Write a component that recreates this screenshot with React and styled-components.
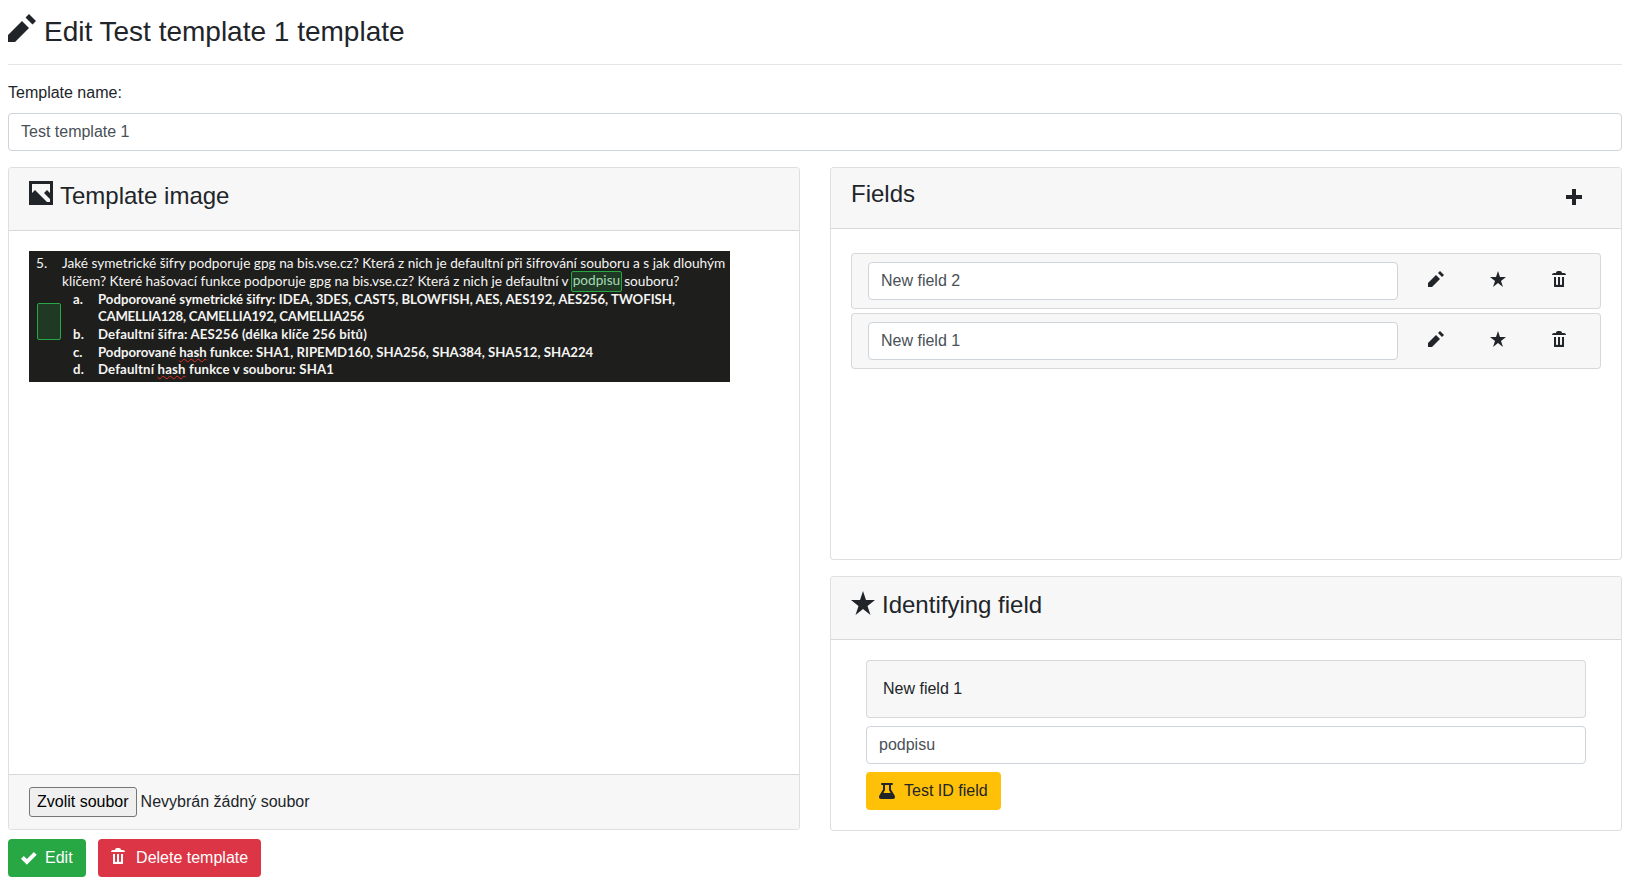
import React from "react";
import styled, { createGlobalStyle } from "styled-components";

const GlobalStyle = createGlobalStyle`
  html, body {
    margin: 0;
    padding: 0;
    background: #fff;
  }
  body {
    font-family: "Liberation Sans", Arial, sans-serif;
    font-size: 16px;
    line-height: 1.5;
    color: #212529;
  }
  * {
    box-sizing: border-box;
  }
`;

const paths = {
  pencil: "M6 0l-1 1 2 2 1-1-2-2zm-2 2l-4 4v2h2l4-4-2-2z",
  star: "M4 0l-1 3h-3l2.5 2-1 3 2.5-2 2.5 2-1-3 2.5-2h-3l-1-3z",
  trash:
    "M3 0c-.55 0-1 .45-1 1h-1c-.55 0-1 .45-1 1h7c0-.55-.45-1-1-1h-1c0-.55-.45-1-1-1h-1zm-2 3v4.81c0 .11.08.19.19.19h4.63c.11 0 .19-.08.19-.19v-4.81h-1v3.5c0 .28-.22.5-.5.5s-.5-.22-.5-.5v-3.5h-1v3.5c0 .28-.22.5-.5.5s-.5-.22-.5-.5v-3.5h-1z",
  plus: "M3 0v3h-3v2h3v3h2v-3h3v-2h-3v-3h-2z",
  check:
    "M6.41 1l-.69.72-2.78 2.78-.81-.78-.72-.72-1.41 1.41.72.72 1.5 1.5.69.72.72-.72 3.5-3.5.72-.72-1.44-1.41z",
  image: "M0 0v8h8v-8h-8zm1 1h6v3l-1-1-1 1 2 2v1h-1l-4-4-1 1v-3z",
  beaker:
    "M1.5 0a.5.5 0 0 0 0 1H2v2.2L.2 6.3C-.3 7.1.2 8 1 8h6c.8 0 1.3-.9.8-1.7L6 3.2V1h.5a.5.5 0 0 0 0-1h-5zM3 1h2v2.5L5.8 5H2.2L3 3.5V1z",
};

const Svg = styled.svg`
  display: block;
  flex: none;
  width: ${(p) => p.$size}px;
  height: ${(p) => p.$size}px;
  margin-top: ${(p) => p.$top || 0}px;
  margin-bottom: ${(p) => p.$raise || 0}px;
  fill: currentColor;
`;

const Icon = ({ name, size = 16, top, raise }) => (
  <Svg viewBox="0 0 8 8" $size={size} $top={top} $raise={raise}>
    <path d={paths[name]} />
  </Svg>
);

const Page = styled.div`
  padding: 0 6px 0 8px;
  width: 1628px;
  height: 895px;
  overflow: hidden;
`;

const Title = styled.h3`
  display: flex;
  align-items: flex-start;
  gap: 8px;
  margin: 0;
  padding: 13px 0 14px;
  font-size: 28px;
  font-weight: 400;
  line-height: 37px;
  border-bottom: 1px solid rgba(0, 0, 0, 0.1);
`;

const Label = styled.label`
  display: block;
  margin: 16px 0 8px;
  line-height: 24px;
`;

const Input = styled.div`
  height: 38px;
  padding: 6px 12px;
  width: ${(p) => p.$width || "100%"};
  flex: none;
  color: #495057;
  background: #fff;
  border: 1px solid #ced4da;
  border-radius: 4px;
`;

const Columns = styled.div`
  display: grid;
  grid-template-columns: minmax(0, 1fr) minmax(0, 1fr);
  column-gap: 30px;
  margin-top: 16px;
`;

const Stack = styled.div`
  display: flex;
  flex-direction: column;
  gap: 16px;
`;

const Card = styled.section`
  display: flex;
  flex-direction: column;
  flex: ${(p) => p.$grow || "none"};
  height: ${(p) => p.$height || "auto"};
  background: #fff;
  border: 1px solid rgba(0, 0, 0, 0.125);
  border-radius: 4px;
  overflow: hidden;
`;

const CardHeader = styled.header`
  display: flex;
  align-items: flex-start;
  justify-content: space-between;
  flex: none;
  height: ${(p) => p.$height}px;
  padding: ${(p) => p.$top}px 20px 0;
  background: #f7f7f7;
  border-bottom: 1px solid rgba(0, 0, 0, 0.125);
`;

const CardTitle = styled.h4`
  display: flex;
  align-items: flex-start;
  gap: 7px;
  margin: 0;
  font-size: 24px;
  font-weight: 400;
  line-height: 29px;
`;

const AddButton = styled.span`
  display: block;
  margin: 10px 19px 0 0;
`;

const CardBody = styled.div`
  flex: 1;
  padding: ${(p) => p.$padding};
`;

const Shot = styled.div`
  position: relative;
  width: 701px;
  height: 131px;
  padding: 4.4px 4px 0 7px;
  background: #1e1e1d;
  color: #f4f4f2;
  font-family: Lato, "Open Sans", sans-serif;
  font-size: 13.67px;
  line-height: 17.65px;
  white-space: nowrap;
`;

const ShotLine = styled.div`
  display: flex;
  height: 17.65px;
  padding-left: ${(p) => (p.$sub ? 37 : 0)}px;
  font-size: ${(p) => (p.$sub ? "13.2px" : "inherit")};
  font-weight: ${(p) => (p.$sub ? 700 : 400)};
  letter-spacing: ${(p) => p.$track || 0}px;
`;

const Marker = styled.span`
  flex: none;
  width: ${(p) => (p.$sub ? 25 : 26)}px;
`;

const Squiggle = styled.span`
  text-decoration: underline wavy #e0302a 1px;
  text-underline-offset: 1px;
`;

const Mark = styled.span`
  flex: none;
  height: 21px;
  margin: -2px 2px 0;
  padding: 0 1px;
  color: #a6d8b4;
  background: rgba(40, 167, 69, 0.2);
  border: 1px solid #28a745;
  border-radius: 2px;
`;

const MarkBox = styled.span`
  position: absolute;
  left: 8px;
  top: 52px;
  width: 24px;
  height: 37px;
  background: rgba(40, 167, 69, 0.2);
  border: 1px solid #28a745;
  border-radius: 2px;
`;

const CardFooter = styled.footer`
  display: flex;
  align-items: center;
  gap: 4px;
  flex: none;
  height: 55px;
  padding: 0 20px;
  background: #f7f7f7;
  border-top: 1px solid rgba(0, 0, 0, 0.125);
`;

const FilePick = styled.span`
  display: block;
  height: 30px;
  padding: 0 7px;
  line-height: 28px;
  color: #000;
  background: #efefef;
  border: 1px solid #767676;
  border-radius: 3px;
`;

const FileName = styled.span`
  color: #212529;
`;

const FieldRow = styled.div`
  display: flex;
  align-items: center;
  height: 56px;
  padding-left: 16px;
  background: #f7f7f7;
  border: 1px solid rgba(0, 0, 0, 0.125);
  border-radius: 4px;
  & + & {
    margin-top: 4px;
  }
`;

const RowActions = styled.div`
  display: grid;
  grid-template-columns: repeat(3, 62px);
  flex: none;
  margin-left: 7px;
  margin-bottom: 4px;
`;

const RowAction = styled.span`
  display: flex;
  justify-content: center;
`;

const Well = styled.div`
  height: 58px;
  padding: 16px;
  line-height: 24px;
  background: #f7f7f7;
  border: 1px solid rgba(0, 0, 0, 0.125);
  border-radius: 4px;
  margin-bottom: 8px;
`;

const Button = styled.span`
  display: inline-flex;
  align-items: center;
  gap: ${(p) => p.$gap || 8}px;
  height: 38px;
  padding: 0 13px;
  color: ${(p) => p.$color || "#fff"};
  background: ${(p) => p.$bg};
  border-radius: 4px;
`;

const Actions = styled.div`
  display: flex;
  gap: 12px;
  margin-top: 8px;
`;

const TestRow = styled.div`
  margin-top: 8px;
`;

const fields = ["New field 2", "New field 1"];

export default function App() {
  return (
    <Page>
      <GlobalStyle />
      <Title>
        <Icon name="pencil" size={28} top={1} />
        Edit Test template 1 template
      </Title>
      <Label>Template name:</Label>
      <Input>Test template 1</Input>
      <Columns>
        <Card $height="663px">
          <CardHeader $height={63} $top={13}>
            <CardTitle>
              <Icon name="image" size={24} />
              Template image
            </CardTitle>
          </CardHeader>
          <CardBody $padding="20px">
            <Shot>
              <MarkBox />
              <ShotLine>
                <Marker>5.</Marker>
                Jaké symetrické šifry podporuje gpg na bis.vse.cz? Která z nich je defaultní při šifrování souboru a s jak dlouhým
              </ShotLine>
              <ShotLine>
                <Marker />
                klíčem? Které hašovací funkce podporuje gpg na bis.vse.cz? Která z nich je defaultní v<Mark>podpisu</Mark>souboru?
              </ShotLine>
              <ShotLine $sub>
                <Marker $sub>a.</Marker>
                Podporované symetrické šifry: IDEA, 3DES, CAST5, BLOWFISH, AES, AES192, AES256, TWOFISH,
              </ShotLine>
              <ShotLine $sub $track={-0.25}>
                <Marker $sub />
                CAMELLIA128, CAMELLIA192, CAMELLIA256
              </ShotLine>
              <ShotLine $sub $track={0.18}>
                <Marker $sub>b.</Marker>
                Defaultní šifra: AES256 (délka klíče 256 bitů)
              </ShotLine>
              <ShotLine $sub>
                <Marker $sub>c.</Marker>
                <span>
                  Podporované <Squiggle>hash</Squiggle> funkce: SHA1, RIPEMD160, SHA256, SHA384, SHA512, SHA224
                </span>
              </ShotLine>
              <ShotLine $sub $track={0.17}>
                <Marker $sub>d.</Marker>
                <span>
                  Defaultní <Squiggle>hash</Squiggle> funkce v souboru: SHA1
                </span>
              </ShotLine>
            </Shot>
          </CardBody>
          <CardFooter>
            <FilePick>Zvolit soubor</FilePick>
            <FileName>Nevybrán žádný soubor</FileName>
          </CardFooter>
        </Card>
        <Stack>
          <Card $height="393px">
            <CardHeader $height={61} $top={11}>
              <CardTitle>Fields</CardTitle>
              <AddButton>
                <Icon name="plus" size={16} />
              </AddButton>
            </CardHeader>
            <CardBody $padding="24px 20px">
              {fields.map((name) => (
                <FieldRow key={name}>
                  <Input $width="530px">{name}</Input>
                  <RowActions>
                    <RowAction>
                      <Icon name="pencil" />
                    </RowAction>
                    <RowAction>
                      <Icon name="star" />
                    </RowAction>
                    <RowAction>
                      <Icon name="trash" />
                    </RowAction>
                  </RowActions>
                </FieldRow>
              ))}
            </CardBody>
          </Card>
          <Card $grow="1">
            <CardHeader $height={63} $top={13}>
              <CardTitle>
                <Icon name="star" size={24} top={1} />
                Identifying field
              </CardTitle>
            </CardHeader>
            <CardBody $padding="20px 35px">
              <Well>New field 1</Well>
              <Input>podpisu</Input>
              <TestRow>
                <Button $bg="#ffc107" $color="#212529" $gap={9}>
                  <Icon name="beaker" />
                  Test ID field
                </Button>
              </TestRow>
            </CardBody>
          </Card>
        </Stack>
      </Columns>
      <Actions>
        <Button $bg="#28a745">
          <Icon name="check" />
          Edit
        </Button>
        <Button $bg="#dc3545" $gap={9.5}>
          <Icon name="trash" raise={4} />
          Delete template
        </Button>
      </Actions>
    </Page>
  );
}
